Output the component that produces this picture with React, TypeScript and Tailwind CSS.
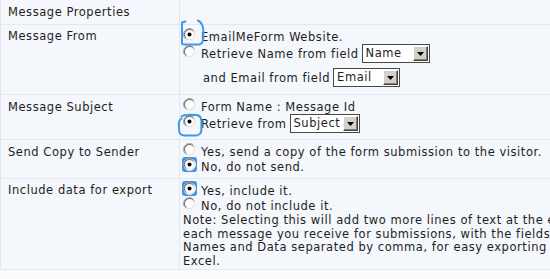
import React from 'react';

// classic windows radio, 13x13
const Radio: React.FC<{ checked?: boolean; highlight?: boolean }> = ({ checked, highlight }) => {
  const dot = (
    <svg width="13" height="13" viewBox="0 0 13 13" className="block">
      <defs>
        <linearGradient id="rdOuter" x1="0" y1="0" x2="1" y2="1">
          <stop offset="0.35" stopColor="#9a9a9a" />
          <stop offset="0.65" stopColor="#f4f4f4" />
        </linearGradient>
        <linearGradient id="rdInner" x1="0" y1="0" x2="1" y2="1">
          <stop offset="0.35" stopColor="#5a5a5a" />
          <stop offset="0.65" stopColor="#dedbd4" />
        </linearGradient>
      </defs>
      <circle cx="6.5" cy="6.5" r="6" fill="#fff" stroke="url(#rdOuter)" />
      <circle cx="6.5" cy="6.5" r="5" fill="#fff" stroke="url(#rdInner)" />
      {checked && <circle cx="6.5" cy="6.5" r="2" fill="#000" />}
    </svg>
  );
  if (highlight) {
    return (
      <span className="-m-[1px] flex h-[15px] w-[15px] shrink-0 items-center justify-center rounded-[3px] bg-[#3f93e6]">
        {dot}
      </span>
    );
  }
  return <span className="shrink-0">{dot}</span>;
};

const Select: React.FC<{ value: string; className: string }> = ({ value, className }) => (
  <span className={`flex h-[19px] shrink-0 border border-[#474747] bg-white ${className}`}>
    <span className="flex-1 pl-[3px] leading-[17px]">{value}</span>
    <span className="m-[1px] flex w-[15px] items-center justify-center border border-t-white border-l-white border-r-[#404040] border-b-[#404040] bg-[#d4d0c8] shadow-[inset_-1px_-1px_0_#808080]">
      <svg width="7" height="4" viewBox="0 0 7 4">
        <path d="M0 0h7L3.5 4z" fill="#000" />
      </svg>
    </span>
  </span>
);

const Label: React.FC<{ children: React.ReactNode; h: string; pt: string }> = ({ children, h, pt }) => (
  <div className={`border-b border-r border-[#e4e9f1] pl-[7px] leading-[15px] ${h} ${pt}`}>{children}</div>
);

export default function App() {
  return (
    <div className="relative h-[279px] w-[550px] overflow-hidden bg-[#fafbfd] font-['DejaVu_Sans','Verdana',sans-serif] text-[11.5px] tracking-[0.55px] text-[#1e1e1e]">
      <div className="grid w-[720px] grid-cols-[179px_540px] border-l border-[#e4e9f1] bg-[#f4f7fb]">
        {/* header */}
        <Label h="h-[25px]" pt="pt-[5px]">Message Properties</Label>
        <div className="h-[25px] border-b border-[#e4e9f1]" />

        {/* message from */}
        <Label h="h-[70px]" pt="pt-[4px]">Message From</Label>
        <div className="h-[70px] border-b border-[#e4e9f1] pl-[3px] pt-[3px]">
          <div className="flex h-[16px] items-start">
            <Radio checked />
            <span className="ml-[5px] mt-[2px] leading-[15px]">EmailMeForm Website.</span>
          </div>
          <div className="flex h-[19px] items-start">
            <span className="mt-[1px]"><Radio /></span>
            <span className="ml-[5px] mt-[3px] leading-[15px]">Retrieve Name from field</span>
            <Select value="Name" className="ml-[3px] w-[68px]" />
          </div>
          <div className="mt-[5px] flex h-[19px] items-start pl-[20px]">
            <span className="mt-[3px] leading-[15px]">and Email from field</span>
            <Select value="Email" className="ml-[3px] w-[67px]" />
          </div>
        </div>

        {/* message subject */}
        <Label h="h-[45px]" pt="pt-[5px]">Message Subject</Label>
        <div className="h-[45px] border-b border-[#e4e9f1] pl-[3px] pt-[3px]">
          <div className="flex h-[16px] items-start">
            <Radio />
            <span className="ml-[5px] mt-[2px] leading-[15px]">Form Name : Message Id</span>
          </div>
          <div className="flex h-[19px] items-start">
            <span className="mt-[1px]"><Radio checked /></span>
            <span className="ml-[5px] mt-[3px] leading-[15px]">Retrieve from</span>
            <Select value="Subject" className="ml-[3px] w-[70px]" />
          </div>
        </div>

        {/* send copy */}
        <Label h="h-[39px]" pt="pt-[5px]">Send Copy to Sender</Label>
        <div className="h-[39px] border-b border-[#e4e9f1] pl-[3px] pt-[3px]">
          <div className="flex h-[15px] items-start">
            <Radio />
            <span className="ml-[5px] mt-[2px] leading-[15px]">Yes, send a copy of the form submission to the visitor.</span>
          </div>
          <div className="flex h-[15px] items-start">
            <Radio checked highlight />
            <span className="ml-[5px] mt-[2px] leading-[15px]">No, do not send.</span>
          </div>
        </div>

        {/* include data */}
        <Label h="h-[91px]" pt="pt-[4px]">Include data for export</Label>
        <div className="h-[91px] border-b border-[#e4e9f1] pl-[3px] pt-[3px]">
          <div className="flex h-[15px] items-start">
            <Radio checked highlight />
            <span className="ml-[5px] mt-[2px] leading-[15px]">Yes, include it.</span>
          </div>
          <div className="flex h-[15px] items-start">
            <Radio />
            <span className="ml-[5px] mt-[2px] leading-[15px]">No, do not include it.</span>
          </div>
          <div className="mt-[2px] whitespace-nowrap leading-[13.7px]">
            <div>Note: Selecting this will add two more lines of text at the end of</div>
            <div>each message you receive for submissions, with the fields</div>
            <div>Names and Data separated by comma, for easy exporting to</div>
            <div>Excel.</div>
          </div>
        </div>
      </div>

      {/* hand drawn marks */}
      <svg className="pointer-events-none absolute left-0 top-0" width="550" height="279">
        <path
          d="M185.5 21.5 L182 22.5 L182 43 Q182 44.5 184 44.5 L199 44.5 Q203 44 203.3 38 L203.3 30 Q203 23 198 20.5"
          fill="none"
          stroke="#3d9bea"
          strokeWidth="2"
          strokeLinecap="round"
          strokeLinejoin="round"
        />
        <path
          d="M181.5 116.5 Q184 114.8 190 114.8 L197 115 Q201.2 116 201.4 121 L201.4 130 Q201 135.2 196 135.4 L184 135.4 Q179.4 135 179.2 131 L178.8 124 Q179 120 181.5 118.5"
          fill="none"
          stroke="#3d9bea"
          strokeWidth="2"
          strokeLinecap="round"
          strokeLinejoin="round"
        />
      </svg>
    </div>
  );
}
